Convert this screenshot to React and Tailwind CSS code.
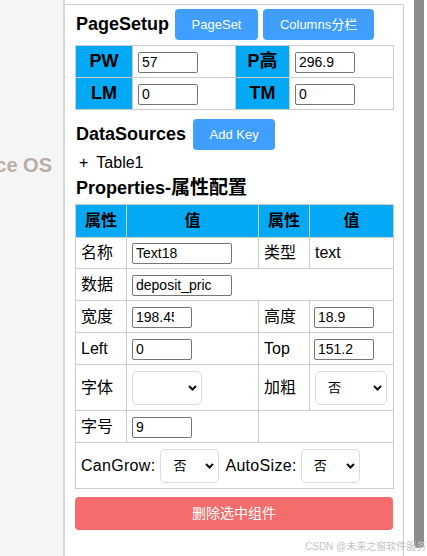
import React from 'react';

const font = "font-['Liberation_Sans','Noto_Sans_CJK_SC',sans-serif]";

function TextInput({ value, w = 'w-[60px] pr-[17px]' }) {
  return (
    <input
      defaultValue={value}
      className={`${w} h-[21px] border border-[#767676] rounded-[2px] pl-[3px] text-[14px] text-black bg-white outline-none ${font}`}
    />
  );
}

function Select({ w, value = '' }) {
  return (
    <div className={`relative inline-block ${w} h-[34px] align-middle`}>
      <select
        defaultValue={value}
        className={`appearance-none w-full h-full border border-[#dcdcdc] rounded-[5px] bg-white pl-[12px] text-[13px] text-black outline-none ${font}`}
      >
        <option value="">{''}</option>
        <option value="否">否</option>
        <option value="是">是</option>
      </select>
      <svg className="absolute right-[5px] top-[14px] pointer-events-none" width="9" height="6" viewBox="0 0 9 6">
        <path d="M1 1 L4.5 4.5 L8 1" fill="none" stroke="#111" strokeWidth="2" />
      </svg>
    </div>
  );
}

function BlueButton({ children, w }) {
  return (
    <button className={`${w} h-[31px] rounded-[4px] bg-[#409eff] text-white text-[13px] ${font}`}>
      {children}
    </button>
  );
}

export default function App() {
  const cell = 'border border-[#cccccc]';
  const head = 'border border-[#cccccc] bg-[#03a9f4] text-center font-bold';

  return (
    <div className={`relative w-[427px] h-[556px] overflow-hidden bg-white flex ${font}`}>
      {/* left strip */}
      <div className="w-[65px] shrink-0 bg-[#f5f5f5] border-r-2 border-[#d6d6d6] flex flex-col">
        <div className="mt-[153px] h-[24px] pr-[11px] flex justify-end items-center overflow-hidden whitespace-nowrap">
          <span className="text-[20px] font-bold text-[#bbaca6]">Workspace OS</span>
        </div>
      </div>

      {/* panel */}
      <div className="w-[339px] shrink-0 mt-[4px] border-t border-r border-[#cccccc] px-[10px]">
        <div className="mt-[4px] h-[31px] flex items-center">
          <h2 className="text-[18px] font-bold text-black ml-[1px]">PageSetup</h2>
          <div className="ml-[6px] flex gap-[5px]">
            <BlueButton w="w-[83px]">PageSet</BlueButton>
            <BlueButton w="w-[111px]">Columns分栏</BlueButton>
          </div>
        </div>

        <table className="mt-[5px] w-[318px] table-fixed border-collapse">
          <colgroup>
            <col className="w-[57px]" />
            <col className="w-[103px]" />
            <col className="w-[54px]" />
            <col className="w-[104px]" />
          </colgroup>
          <tbody>
            <tr className="h-[32px]">
              <td className={`${head} text-[18px]`}>PW</td>
              <td className={`${cell} pl-[5px]`}><TextInput value="57" /></td>
              <td className={`${head} text-[18px]`}>P高</td>
              <td className={`${cell} pl-[5px]`}><TextInput value="296.9" /></td>
            </tr>
            <tr className="h-[32px]">
              <td className={`${head} text-[18px]`}>LM</td>
              <td className={`${cell} pl-[5px]`}><TextInput value="0" /></td>
              <td className={`${head} text-[18px]`}>TM</td>
              <td className={`${cell} pl-[5px]`}><TextInput value="0" /></td>
            </tr>
          </tbody>
        </table>

        <div className="mt-[9px] h-[31px] flex items-center">
          <h2 className="text-[18px] font-bold text-black ml-[1px]">DataSources</h2>
          <div className="ml-[7px]">
            <BlueButton w="w-[82px]">Add Key</BlueButton>
          </div>
        </div>

        <div className="mt-[2px] h-[22px] flex items-center pl-[4px] text-[16px] text-black">
          <span>+</span>
          <span className="ml-[8px]">Table1</span>
        </div>

        <h2 className="h-[28px] flex items-center text-[18px] font-bold text-black ml-[1px]">
          Properties-<span className="text-[19px]">属性配置</span>
        </h2>

        <table className="mt-[2px] w-[318px] table-fixed border-collapse text-[16px] text-black">
          <colgroup>
            <col className="w-[51px]" />
            <col className="w-[132px]" />
            <col className="w-[51px]" />
            <col className="w-[84px]" />
          </colgroup>
          <tbody>
            <tr className="h-[33px]">
              <td className={head}>属性</td>
              <td className={head}>值</td>
              <td className={head}>属性</td>
              <td className={head}>值</td>
            </tr>
            <tr className="h-[31px]">
              <td className={`${cell} pl-[5px]`}>名称</td>
              <td className={`${cell} pl-[5px]`}><TextInput value="Text18" w="w-[100px] pr-[20px]" /></td>
              <td className={`${cell} pl-[5px]`}>类型</td>
              <td className={`${cell} pl-[5px]`}>text</td>
            </tr>
            <tr className="h-[32px]">
              <td className={`${cell} pl-[5px]`}>数据</td>
              <td className={`${cell} pl-[5px]`} colSpan={3}><TextInput value="deposit_price" w="w-[100px] pr-[20px]" /></td>
            </tr>
            <tr className="h-[32px]">
              <td className={`${cell} pl-[5px]`}>宽度</td>
              <td className={`${cell} pl-[5px]`}><TextInput value="198.45" /></td>
              <td className={`${cell} pl-[5px]`}>高度</td>
              <td className={`${cell} pl-[4px]`}><TextInput value="18.9" /></td>
            </tr>
            <tr className="h-[32px]">
              <td className={`${cell} pl-[5px]`}>Left</td>
              <td className={`${cell} pl-[5px]`}><TextInput value="0" /></td>
              <td className={`${cell} pl-[5px]`}>Top</td>
              <td className={`${cell} pl-[4px]`}><TextInput value="151.2" /></td>
            </tr>
            <tr className="h-[46px]">
              <td className={`${cell} pl-[5px]`}>字体</td>
              <td className={`${cell} pl-[5px]`}><Select w="w-[70px]" /></td>
              <td className={`${cell} pl-[5px]`}>加粗</td>
              <td className={`${cell} pl-[5px]`}><Select w="w-[72px]" value="否" /></td>
            </tr>
            <tr className="h-[32px]">
              <td className={`${cell} pl-[5px]`}>字号</td>
              <td className={`${cell} pl-[5px]`}><TextInput value="9" /></td>
              <td className={cell} colSpan={2}></td>
            </tr>
            <tr className="h-[46px]">
              <td className={`${cell} pl-[5px]`} colSpan={4}>
                <div className="flex items-center">
                  <span className="tracking-[0.3px]">CanGrow:</span>
                  <span className="ml-[5px]"><Select w="w-[59px]" value="否" /></span>
                  <span className="ml-[6px] tracking-[0.3px]">AutoSize:</span>
                  <span className="ml-[4px]"><Select w="w-[59px]" value="否" /></span>
                </div>
              </td>
            </tr>
          </tbody>
        </table>

        <button className="mt-[8px] w-[318px] h-[33px] rounded-[4px] bg-[#f56c6c] text-white text-[14px]">
          删除选中组件
        </button>
      </div>

      {/* scrollbar */}
      <div className="ml-[10px] w-[10px] h-[548px] bg-[#8c8c8c] rounded-b-[4px]" />

      <div className="absolute left-[305px] top-[539px] text-[10px] text-[#c4c4c4] whitespace-nowrap">
        CSDN @未来之窗软件服务
      </div>
    </div>
  );
}
